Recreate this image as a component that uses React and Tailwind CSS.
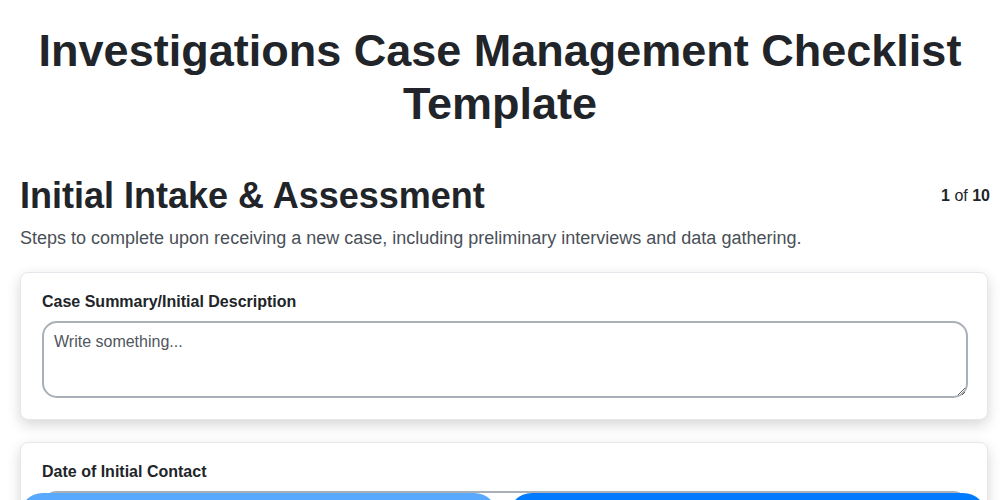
// App.jsx

const App = () => {
  return (
    <div className="min-h-screen bg-white text-[#212529] font-['Liberation_Sans',Arial,sans-serif]">
      {/* Page title */}
      <h1 className="pt-6 px-5 text-center text-[45px] leading-[53px] font-bold">
        Investigations Case Management Checklist Template
      </h1>

      <section className="pl-5 pr-3 pt-[44px] pb-32">
        {/* Section header */}
        <div className="flex items-center justify-between">
          <h2 className="text-[36px] leading-[1.2] font-bold">Initial Intake &amp; Assessment</h2>
          <div className="text-base -mr-[2px]">
            <strong>1</strong> of <strong>10</strong>
          </div>
        </div>
        <p className="mt-2 text-[18px] leading-[1.5] text-[#495057]">
          Steps to complete upon receiving a new case, including preliminary interviews and data gathering.
        </p>

        {/* Step cards */}
        <div className="mt-5 flex flex-col gap-[22px]">
          <div className="bg-white border border-[#e6e7ec] rounded-lg shadow-[0_5px_14px_rgba(0,0,0,0.16)] pl-[21px] pr-[19px] pt-[17px] pb-[21px]">
            <label className="block text-base leading-6 font-bold mb-[7px]">Case Summary/Initial Description</label>
            <textarea
              rows={3}
              placeholder="Write something..."
              className="block w-full h-[77px] border-2 border-[#a9b0b7] rounded-[15px] px-[10px] py-[7px] text-base placeholder:text-[#4f565d] outline-none"
            />
          </div>

          <div className="bg-white border border-[#e6e7ec] rounded-lg shadow-[0_5px_14px_rgba(0,0,0,0.16)] pl-[21px] pr-[19px] pt-[17px] pb-[21px]">
            <label className="block text-base leading-6 font-bold mb-[7px]">Date of Initial Contact</label>
            <input
              type="date"
              className="block w-full h-[44px] border-2 border-[#a9b0b7] rounded-[15px] px-[10px] text-base outline-none"
            />
          </div>
        </div>
      </section>

      {/* Navigation buttons, fixed over the bottom edge */}
      <div className="fixed left-0 right-0 top-[493px] pl-[19px] pr-[13px] flex gap-[10px]">
        <button aria-label="Previous" className="flex-1 h-12 rounded-full bg-[#59a9ff]" />
        <button aria-label="Next" className="flex-1 h-12 rounded-full bg-[#007bff]" />
      </div>
    </div>
  );
};

export default App;
